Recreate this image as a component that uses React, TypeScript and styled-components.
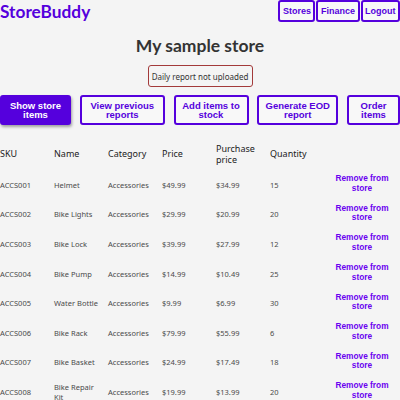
import React from "react";
import styled, { createGlobalStyle } from "styled-components";

const Global = createGlobalStyle`
  html, body { margin: 0; padding: 0; background: #f4f4f4; }
  body { font-family: "Noto Sans", "Open Sans", sans-serif; color: #333; }
`;

const Page = styled.div`
  width: 400px;
  overflow: hidden;
`;

const Header = styled.header`
  display: flex;
  justify-content: space-between;
  align-items: flex-start;
  height: 22px;
`;

const Logo = styled.h1`
  margin: 0;
  font-family: Lato, "Noto Sans", sans-serif;
  font-weight: 700;
  font-size: 17.3px;
  line-height: 24px;
  color: #5500dd;
`;

const Nav = styled.nav`
  display: flex;
  gap: 1px;
`;

const NavButton = styled.button`
  height: 22px;
  padding: 0 2.5px;
  border: 2px solid #5500dd;
  border-radius: 3px;
  background: #f8f8f8;
  color: #5500dd;
  font-family: "Liberation Sans", Arial, sans-serif;
  font-weight: 700;
  font-size: 9px;
  cursor: pointer;
`;

const Title = styled.h2`
  margin: 13px 0 0;
  text-align: center;
  font-family: Lato, "Noto Sans", sans-serif;
  font-size: 17.5px;
  line-height: 22px;
  font-weight: 700;
  color: #333;
`;

const AlertRow = styled.div`
  display: flex;
  justify-content: center;
  margin-top: 8px;
`;

const Alert = styled.div`
  width: 105px;
  height: 22px;
  box-sizing: border-box;
  border: 1px solid #a33a3a;
  border-radius: 3px;
  display: flex;
  align-items: center;
  justify-content: center;
  font-size: 8px;
  color: #333;
  white-space: nowrap;
`;

const Actions = styled.div`
  display: flex;
  justify-content: space-between;
  margin-top: 8px;
`;

const ActionButton = styled.button<{ $w: number; $primary?: boolean }>`
  width: ${(p) => p.$w}px;
  height: 30px;
  padding: 0 4px;
  box-sizing: border-box;
  border: 2px solid #5500dd;
  border-radius: 3px;
  background: ${(p) => (p.$primary ? "#5500dd" : "#f8f8f8")};
  color: ${(p) => (p.$primary ? "#ffffff" : "#5500dd")};
  box-shadow: ${(p) => (p.$primary ? "1px 2px 3px rgba(0,0,0,0.35)" : "none")};
  font-family: "Liberation Sans", Arial, sans-serif;
  font-weight: 700;
  font-size: 9.5px;
  line-height: 9px;
  cursor: pointer;
`;

const Table = styled.table`
  width: 400px;
  margin-top: 12px;
  border-collapse: collapse;
  table-layout: fixed;
`;

const Th = styled.th`
  text-align: left;
  font-weight: 400;
  font-size: 9px;
  line-height: 11px;
  color: #222;
  padding: 0 4px 0 0;
  height: 33px;
  vertical-align: middle;
`;

const Td = styled.td`
  font-size: 7.5px;
  line-height: 10px;
  color: #4a4a4a;
  padding: 0 4px 0 0;
  height: 29.6px;
  vertical-align: middle;
`;

const ActionCell = styled.td`
  text-align: center;
  padding: 0;
  vertical-align: middle;
`;

const RemoveButton = styled.button`
  border: none;
  background: none;
  padding: 0;
  width: 56px;
  color: #6a00f0;
  font-family: "Liberation Sans", Arial, sans-serif;
  font-weight: 700;
  font-size: 8.3px;
  line-height: 9.5px;
  cursor: pointer;
`;

const items = [
  ["ACCS001", "Helmet", "$49.99", "$34.99", "15"],
  ["ACCS002", "Bike Lights", "$29.99", "$20.99", "20"],
  ["ACCS003", "Bike Lock", "$39.99", "$27.99", "12"],
  ["ACCS004", "Bike Pump", "$14.99", "$10.49", "25"],
  ["ACCS005", "Water Bottle", "$9.99", "$6.99", "30"],
  ["ACCS006", "Bike Rack", "$79.99", "$55.99", "6"],
  ["ACCS007", "Bike Basket", "$24.99", "$17.49", "18"],
  ["ACCS008", "Bike Repair Kit", "$19.99", "$13.99", "20"],
];

export default function App() {
  return (
    <Page>
      <Global />
      <Header>
        <Logo>StoreBuddy</Logo>
        <Nav>
          <NavButton>Stores</NavButton>
          <NavButton>Finance</NavButton>
          <NavButton>Logout</NavButton>
        </Nav>
      </Header>
      <Title>My sample store</Title>
      <AlertRow>
        <Alert>Daily report not uploaded</Alert>
      </AlertRow>
      <Actions>
        <ActionButton $w={71} $primary>Show store items</ActionButton>
        <ActionButton $w={85}>View previous reports</ActionButton>
        <ActionButton $w={75}>Add items to stock</ActionButton>
        <ActionButton $w={81}>Generate EOD report</ActionButton>
        <ActionButton $w={53}>Order items</ActionButton>
      </Actions>
      <Table>
        <colgroup>
          <col style={{ width: 54 }} />
          <col style={{ width: 54 }} />
          <col style={{ width: 54 }} />
          <col style={{ width: 54 }} />
          <col style={{ width: 54 }} />
          <col style={{ width: 54 }} />
          <col />
        </colgroup>
        <thead>
          <tr>
            <Th>SKU</Th>
            <Th>Name</Th>
            <Th>Category</Th>
            <Th>Price</Th>
            <Th>Purchase price</Th>
            <Th>Quantity</Th>
            <Th />
          </tr>
        </thead>
        <tbody>
          {items.map(([sku, name, price, purchase, qty]) => (
            <tr key={sku}>
              <Td>{sku}</Td>
              <Td>{name}</Td>
              <Td>Accessories</Td>
              <Td>{price}</Td>
              <Td>{purchase}</Td>
              <Td>{qty}</Td>
              <ActionCell>
                <RemoveButton>Remove from store</RemoveButton>
              </ActionCell>
            </tr>
          ))}
        </tbody>
      </Table>
    </Page>
  );
}
